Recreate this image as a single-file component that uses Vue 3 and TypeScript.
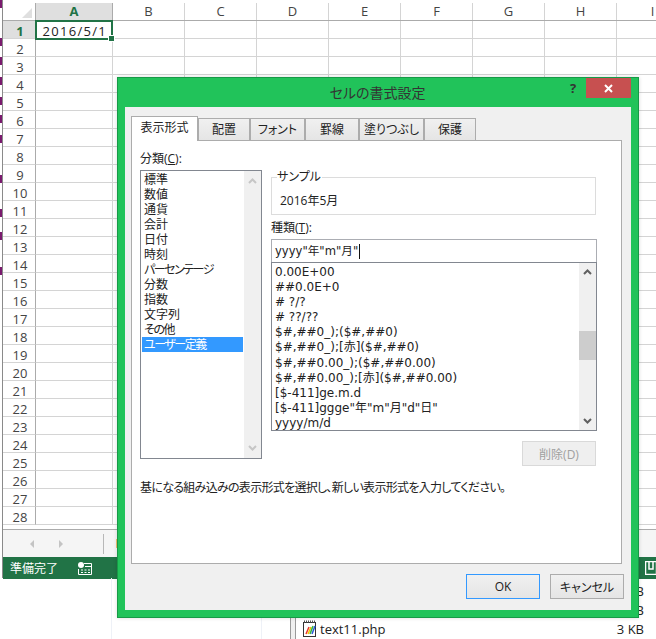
<script setup lang="ts">
const cols = ['A', 'B', 'C', 'D', 'E', 'F', 'G', 'H', 'I']
const rows = Array.from({ length: 28 }, (_, i) => i + 1)
const tabs = ['表示形式', '配置', 'フォント', '罫線', '塗りつぶし', '保護']
const tabWidths = [67, 52, 55, 54, 65, 52]
const categories = ['標準', '数値', '通貨', '会計', '日付', '時刻', 'パーセンテージ', '分数', '指数', '文字列', 'その他', 'ユーザー定義']
const tight = ['パーセンテージ', 'その他', 'ユーザー定義']
const formats = [
  '0.00E+00', '##0.0E+0', '# ?/?', '# ??/??',
  '$#,##0_);($#,##0)', '$#,##0_);[赤]($#,##0)',
  '$#,##0.00_);($#,##0.00)', '$#,##0.00_);[赤]($#,##0.00)',
  '[$-411]ge.m.d', '[$-411]ggge"年"m"月"d"日"', 'yyyy/m/d',
]
const bitGaps = [0, 30, 11, 12, 12, 10, 12, 32, 26, 15, 27]
</script>

<template>
  <div class="page">
    <div class="top">
      <div class="strip">
        <i v-for="(b, i) in bitGaps" :key="i" class="bit" :style="{ marginTop: b + 'px' }"></i>
      </div>
      <div class="excel">
        <div class="head">
          <div class="corner"><span class="tri"></span></div>
          <div v-for="c in cols" :key="c" class="colh" :class="{ on: c === 'A', wide: c === 'A' }">{{ c }}</div>
        </div>
        <div v-for="r in rows" :key="r" class="row">
          <div class="rowh" :class="{ on: r === 1 }">{{ r }}</div>
          <div v-for="c in cols" :key="c" class="cell" :class="{ wide: c === 'A' }"></div>
          <div v-if="r === 1" class="sel">2016/5/1<span class="handle"></span></div>
        </div>
        <div class="sheetbar">
          <span class="arrow left"></span>
          <span class="arrow right"></span>
          <span class="sep"></span>
          <span class="tabbit"></span>
        </div>
        <div class="status">
          <span class="ready">準備完了</span>
          <svg class="macro" width="14" height="13" viewBox="0 0 14 13">
            <circle cx="3" cy="3" r="3" fill="#fff" />
            <path d="M6 1.5h7.5V12.5H.5V7" fill="none" stroke="#fff" />
            <path d="M3 8h2M6.500 8h2M10 8h2M3 10.500h2M6.500 10.500h2M10 10.500h2M7 4.500h6" stroke="#fff" />
          </svg>
          <svg class="layout" width="12" height="14" viewBox="0 0 12 14">
            <path d="M.5 .5h11v13H.5zM4 1v7h4V1" fill="none" stroke="#fff" stroke-width="1.500" />
          </svg>
        </div>
      </div>
    </div>

    <div class="explorer">
      <div class="ecol c1"></div>
      <div class="ecol c2"></div>
      <div class="ecol c3"></div>
      <div class="ecol c4"></div>
      <div class="files">
        <div class="file"><span class="fname"></span><span class="size">3 KB</span></div>
        <div class="file"><span class="fname"></span><span class="size">3 KB</span></div>
        <div class="file">
          <span class="fname">
            <svg width="16" height="17" viewBox="0 0 16 17">
              <rect x="1.500" y="2.500" width="12" height="14" fill="#fff" stroke="#333" />
              <path d="M2 1.500h11" stroke="#555" stroke-dasharray="1 1" stroke-width="2" />
              <path d="M4 14 7 7" stroke="#e8342a" stroke-width="1.500" />
              <path d="M6 14 9 7" stroke="#f2c200" stroke-width="1.500" />
              <path d="M8 14 11 6" stroke="#2fb344" stroke-width="1.500" />
              <path d="M10 14 13 6" stroke="#2a5bd7" stroke-width="1.500" />
            </svg>
            text11.php
          </span>
          <span class="size">3 KB</span>
        </div>
      </div>
    </div>

    <div class="dialog">
      <div class="titlebar">
        <span class="title">セルの書式設定</span>
        <span class="help">?</span>
        <span class="close">
          <svg width="9" height="9" viewBox="0 0 9 9"><path d="M1 1l7 7M8 1l-7 7" stroke="#fff" stroke-width="2" /></svg>
        </span>
      </div>
      <div class="body">
        <div class="tabs">
          <div v-for="(t, i) in tabs" :key="t" class="tab" :class="{ active: i === 0 }" :style="{ width: tabWidths[i] + 'px' }">{{ t }}</div>
        </div>
        <div class="panel">
          <div class="columns">
            <div class="leftcol">
              <div class="label">分類(<u>C</u>):</div>
              <div class="listbox">
                <div class="items">
                  <div v-for="(c, i) in categories" :key="c" class="cat" :class="{ picked: i === categories.length - 1, tight: tight.includes(c) }">{{ c }}</div>
                </div>
                <div class="scroll">
                  <svg class="chev" width="9" height="6" viewBox="0 0 9 6"><path d="M1 5l3.500-3.500L8 5" fill="none" stroke="#c6c6c6" stroke-width="2" /></svg>
                  <svg class="chev" width="9" height="6" viewBox="0 0 9 6"><path d="M1 1l3.500 3.500L8 1" fill="none" stroke="#c6c6c6" stroke-width="2" /></svg>
                </div>
              </div>
            </div>
            <div class="rightcol">
              <div class="sample">
                <span class="legend">サンプル</span>
                <div class="sampletext">2016年5月</div>
              </div>
              <div class="label kind">種類(<u>T</u>):</div>
              <div class="input">yyyy"年"m"月"<span class="caret"></span></div>
              <div class="fmtlist">
                <div class="fmtitems">
                  <div v-for="f in formats" :key="f" class="fmt">{{ f }}</div>
                </div>
                <div class="scroll dark">
                  <svg class="chev" width="9" height="6" viewBox="0 0 9 6"><path d="M1 5l3.500-3.500L8 5" fill="none" stroke="#606060" stroke-width="2" /></svg>
                  <div class="track"><span class="thumb"></span></div>
                  <svg class="chev" width="9" height="6" viewBox="0 0 9 6"><path d="M1 1l3.500 3.500L8 1" fill="none" stroke="#606060" stroke-width="2" /></svg>
                </div>
              </div>
              <div class="delrow"><button class="del">削除(D)</button></div>
            </div>
          </div>
          <p class="desc">基になる組み込みの表示形式を選択し、新しい表示形式を入力してください。</p>
        </div>
        <div class="footer">
          <button class="btn primary">OK</button>
          <button class="btn">キャンセル</button>
        </div>
      </div>
    </div>
  </div>
</template>

<style>
html, body { margin: 0; padding: 0; background: #fff; overflow: hidden; }
</style>

<style scoped>
.page {
  position: relative;
  width: 656px;
  height: 639px;
  overflow: hidden;
  font-family: "Open Sans", "Noto Sans CJK JP", sans-serif;
  font-size: 12px;
  font-feature-settings: "palt";
  color: #222;
  background: #fff;
}
.top { display: flex; height: 578px; }
.strip { width: 2px; flex: none; display: flex; flex-direction: column; overflow: hidden; }
.bit { display: block; width: 2px; height: 8px; background: #7a1a6e; flex: none; }
.excel { flex: none; width: 654px; height: 578px; border-left: 1px solid #8a8a8a; border-bottom: 1px solid #8a8a8a; box-sizing: border-box; padding-top: 3px; background: #fff; }
.head { display: flex; height: 18px; box-sizing: border-box; border-bottom: 1px solid #ababab; }
.corner { width: 33px; flex: none; position: relative; border-right: 1px solid #ababab; box-sizing: border-box; }
.tri { position: absolute; right: 3px; bottom: 2px; width: 0; height: 0; border-left: 10px solid transparent; border-bottom: 10px solid #dfdfdf; }
.colh { width: 72px; flex: none; box-sizing: border-box; text-align: center; font-size: 13px; line-height: 16px; color: #444; border-right: 1px solid #d4d4d4; }
.colh.wide { width: 77px; }
.colh.on { background: #dfdfdf; color: #217346; font-weight: 700; border-right-color: #ababab; }
.row { display: flex; height: 18px; position: relative; }
.rowh { width: 33px; flex: none; box-sizing: border-box; border-right: 1px solid #ababab; border-bottom: 1px solid #d4d4d4; text-align: center; font-size: 13px; line-height: 20px; color: #444; padding-left: 2px; }
.rowh.on { background: #dfdfdf; color: #217346; font-weight: 700; }
.cell { width: 72px; flex: none; box-sizing: border-box; border-right: 1px solid #d4d4d4; border-bottom: 1px solid #d4d4d4; }
.cell.wide { width: 77px; }
.sel {
  position: absolute; left: 32px; top: -1px; width: 78px; height: 20px; box-sizing: border-box;
  border: 2px solid #217346; text-align: right; padding-right: 4px; font-size: 13px; line-height: 18px; letter-spacing: 1.300px; color: #222; z-index: 1;
}
.handle { position: absolute; right: -4px; bottom: -4px; width: 5px; height: 5px; background: #217346; border: 1px solid #fff; }
.sheetbar { margin-top: 4px; height: 27px; border-top: 1px solid #ababab; background: #f5f5f5; display: flex; align-items: center; padding-left: 27px; }
.arrow { width: 0; height: 0; border-top: 4px solid transparent; border-bottom: 4px solid transparent; flex: none; }
.arrow.left { border-right: 4px solid #c4c4c4; }
.arrow.right { border-left: 4px solid #c4c4c4; margin-left: 25px; }
.sep { width: 1px; height: 20px; background: #b8b8b8; margin-left: 40px; flex: none; }
.tabbit { width: 2px; height: 9px; background: #f0c070; margin-left: 12px; flex: none; }
.status { height: 22px; background: #217346; color: #fff; display: flex; align-items: center; font-size: 12px; padding-left: 7px; }
.ready { width: 68px; flex: none; font-feature-settings: normal; }
.macro { flex: none; }
.layout { flex: none; margin-left: 553px; }
.explorer { position: relative; height: 61px; display: flex; }
.ecol { flex: none; box-sizing: border-box; height: 61px; }
.c1 { width: 112px; border-right: 1px solid #eef1f7; }
.c2 { width: 150px; border-right: 1px solid #eef1f7; }
.c3 { width: 29px; border-right: 1px solid #9a9a9a; }
.c4 { width: 5px; border-right: 1px solid #9a9a9a; background: #f0f0f0; }
.files { flex: 1; min-width: 0; padding-top: 3px; padding-right: 12px; }
.file { height: 19px; display: flex; justify-content: space-between; align-items: center; font-size: 13px; color: #222; }
.fname { display: flex; align-items: center; gap: 2px; padding-left: 6px; }
.size { color: #222; }
.dialog {
  position: absolute; left: 117px; top: 77px; width: 522px; height: 541px; box-sizing: border-box;
  background: #21c35a; border: 1px solid #179a47; box-shadow: 0 0 4px rgba(0,0,0,.15);
  padding: 0 7px 7px 7px; display: flex; flex-direction: column;
}
.titlebar { height: 29px; flex: none; position: relative; display: flex; justify-content: center; align-items: center; box-sizing: border-box; }
.title { font-size: 14px; color: #333; margin-left: -1px; margin-top: -2px; }
.help { position: absolute; left: 445px; top: 0; font-size: 13px; font-weight: 700; color: #333; line-height: 20px; }
.close { position: absolute; left: 461px; top: 0; width: 45px; height: 20px; background: #c75050; display: flex; align-items: center; justify-content: center; }
.body { flex: 1; min-height: 0; background: #f0f0f0; padding: 9px 7px 0 6px; display: flex; flex-direction: column; }
.tabs { display: flex; height: 24px; align-items: flex-end; flex: none; position: relative; z-index: 1; }
.tab { height: 22px; box-sizing: border-box; border: 1px solid #acacac; border-bottom: none; background: linear-gradient(#f0f0f0, #e5e5e5); text-align: center; font-size: 12px; line-height: 21px; color: #222; flex: none; }
.tab.active { height: 25px; background: #fff; border-bottom: none; margin-bottom: -1px; line-height: 22px; padding-bottom: 2px; }
.panel { width: 491px; height: 424px; flex: none; box-sizing: border-box; border: 1px solid #acacac; background: #fff; padding: 10px 25px 0 8px; }
.columns { display: flex; gap: 9px; }
.leftcol { width: 122px; flex: none; }
.label { font-size: 12px; line-height: 16px; color: #222; }
.listbox { margin-top: 3px; height: 289px; box-sizing: border-box; border: 1px solid #828790; display: flex; }
.items { flex: 1; padding: 1px 1px 0 1px; }
.cat { height: 15px; line-height: 16px; padding-left: 2px; font-size: 12px; color: #222; }
.cat.tight { letter-spacing: -1.500px; }
.cat.picked { background: #3399ff; color: #fff; }
.scroll { width: 17px; flex: none; background: #f0f0f0; display: flex; flex-direction: column; align-items: center; justify-content: space-between; padding: 7px 0; box-sizing: border-box; }
.chev { flex: none; }
.rightcol { flex: none; width: 326px; }
.sample { margin-top: 26px; padding: 15px 0 0 8px; width: 325px; height: 38px; box-sizing: border-box; border: 1px solid #dcdcdc; position: relative; }
.legend { position: absolute; left: 5px; top: -8px; background: #fff; padding-right: 1px; font-size: 12px; line-height: 14px; color: #222; }
.sampletext { font-size: 12px; line-height: 16px; }
.kind { margin-top: 5px; }
.input { margin-top: 3px; height: 24px; box-sizing: border-box; border: 1px solid #abadb3; font-family: "DejaVu Sans", "Noto Sans CJK JP", sans-serif; font-size: 11.600px; line-height: 21px; padding-left: 3px; display: flex; align-items: center; }
.caret { display: inline-block; width: 1px; height: 15px; background: #111; margin-left: 1px; }
.fmtlist { height: 169px; box-sizing: border-box; border: 1px solid #828790; margin-top: -1px; display: flex; }
.fmtitems { flex: 1; padding: 2px 0 0 3px; overflow: hidden; }
.fmt { height: 15.100px; line-height: 15px; font-family: "DejaVu Sans", "Noto Sans CJK JP", sans-serif; font-size: 12px; color: #222; white-space: nowrap; }
.dark { padding: 6px 0; }
.track { flex: 1; width: 100%; position: relative; }
.thumb { position: absolute; left: 0; top: 56px; width: 100%; height: 29px; background: #cdcdcd; }
.delrow { display: flex; justify-content: flex-end; margin-top: 10px; padding-right: 1px; }
.del { width: 74px; height: 25px; border: 1px solid #d9d9d9; background: #efefef; color: #a0a0a0; font: inherit; font-size: 12px; padding: 0; }
.desc { margin: 14px 0 0; font-size: 12px; letter-spacing: -0.700px; line-height: 16px; color: #222; white-space: nowrap; }
.footer { flex: 1; display: flex; justify-content: flex-end; gap: 10px; padding-top: 10px; }
.btn { width: 74px; height: 25px; box-sizing: border-box; border: 1px solid #acacac; background: linear-gradient(#f0f0f0, #e5e5e5); font: inherit; font-size: 12px; color: #222; padding: 0; }
.primary { border-color: #3399ff; }
</style>
